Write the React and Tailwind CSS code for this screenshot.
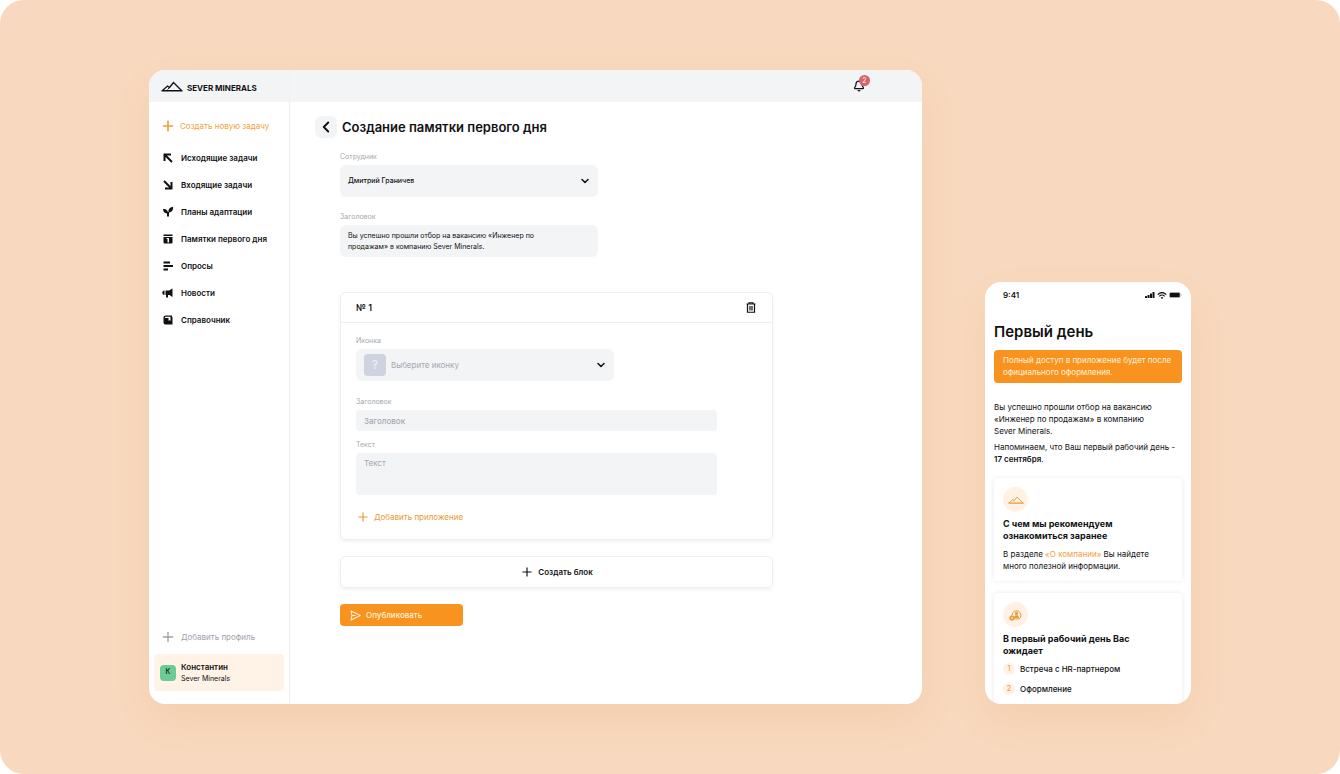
import { useState } from "react";
import { Bell, ChevronDown, ChevronLeft, Plus } from "lucide-react";

const MENU = [
    { label: "Исходящие задачи", icon: OutgoingIcon },
    { label: "Входящие задачи", icon: IncomingIcon },
    { label: "Планы адаптации", icon: SproutIcon },
    { label: "Памятки первого дня", icon: CalendarIcon },
    { label: "Опросы", icon: SurveyIcon },
    { label: "Новости", icon: MegaphoneIcon },
    { label: "Справочник", icon: BookIcon },
];

const STEPS = ["Встреча с HR-партнером", "Оформление"];

function OutgoingIcon() {
    return (
        <svg viewBox="0 0 24 24" className="size-3" fill="none" stroke="currentColor" strokeWidth="4">
            <path d="M5 18V5h13M5 5l15 15" />
        </svg>
    );
}

function IncomingIcon() {
    return (
        <svg viewBox="0 0 24 24" className="size-3" fill="none" stroke="currentColor" strokeWidth="4">
            <path d="M19 6v13H6M19 19 4 4" />
        </svg>
    );
}

function SproutIcon() {
    return (
        <svg viewBox="0 0 24 24" className="size-3" fill="currentColor">
            <path d="M2 6c6-1 9 2 10 7v2C6 15 2 12 2 6Z" />
            <path d="M22 2c1 6-3 11-9 11-1-6 2-11 9-11Z" />
            <path d="M10 12h4v9h-4z" />
        </svg>
    );
}

function CalendarIcon() {
    return (
        <svg viewBox="0 0 24 24" className="size-3" fill="currentColor">
            <path d="M3 3h18v3H3z" />
            <path fillRule="evenodd" d="M3 8h18v11a2 2 0 0 1-2 2H5a2 2 0 0 1-2-2V8Zm6 2v2h2v7h3v-9H9Z" />
        </svg>
    );
}

function SurveyIcon() {
    return (
        <svg viewBox="0 0 24 24" className="size-3" fill="currentColor">
            <path d="M3 3h13v4H3zM3 10h19v4H3zM3 17h9v4H3z" />
        </svg>
    );
}

function MegaphoneIcon() {
    return (
        <svg viewBox="0 0 24 24" className="size-3" fill="currentColor">
            <path d="M21 3v17l-6-4h-3v5H8v-5H7V7h7l7-4Z" />
            <path d="M5 7v9a4.5 4.5 0 0 1 0-9Z" />
        </svg>
    );
}

function BookIcon() {
    return (
        <svg viewBox="0 0 24 24" className="size-3" fill="currentColor">
            <path fillRule="evenodd" d="M7 3h13v3h1v15H7a4 4 0 0 1-4-4V7a4 4 0 0 1 4-4Zm0 2.500a1 1 0 0 0 0 2.500h6v6l2-2 2 2V5.500H7Z" />
        </svg>
    );
}

function Mountains({ className }) {
    return (
        <svg viewBox="0 0 44 22" className={className} fill="none" stroke="currentColor" strokeWidth="2.6">
            <path d="m3 19 10-9 4 3 8-10 16 16" />
            <path d="m16 14-3 3" strokeWidth="2" />
            <path d="M1 19.5h42" strokeWidth="3" />
        </svg>
    );
}

function TrashIcon() {
    return (
        <svg viewBox="0 0 20 22" className="h-[11px] w-[10px]" fill="none" stroke="currentColor" strokeWidth="2.4">
            <path d="M1 4h18M6 3V1.5h8V3M3 4v16.500h14V4M8 8v9M12 8v9" />
        </svg>
    );
}

function SendIcon() {
    return (
        <svg viewBox="0 0 22 22" className="size-[11px]" fill="none" stroke="currentColor" strokeWidth="2.2" strokeLinejoin="round">
            <path d="M2 2 20.500 11 2 20l2-9Z" />
            <path d="M4 11h7" />
        </svg>
    );
}

function PersonIcon() {
    return (
        <svg viewBox="0 0 26 24" className="h-3 w-[13px]" fill="none" stroke="currentColor" strokeWidth="2">
            <path d="M6 12a9 9 0 1 1 14 8h-9" />
            <circle cx="15" cy="9" r="2.500" fill="currentColor" />
            <path d="M11 17c0-5 8-5 8 0Z" fill="currentColor" />
            <circle cx="6" cy="18" r="4.500" fill="currentColor" />
            <circle cx="6" cy="18" r="1" stroke="#fff2e4" />
        </svg>
    );
}

function StatusIcons() {
    return (
        <div className="flex items-center gap-[2px]">
            <svg viewBox="0 0 20 12" className="h-[6px] w-[10px]" fill="currentColor">
                <rect x="0" y="8" width="4" height="4" rx="1" />
                <rect x="5" y="6" width="4" height="6" rx="1" />
                <rect x="10" y="3" width="4" height="9" rx="1" />
                <rect x="15" y="0" width="4" height="12" rx="1" />
            </svg>
            <svg viewBox="0 0 18 13" className="h-[7px] w-[10px]" fill="none" stroke="currentColor" strokeWidth="2.2">
                <path d="M1 5c5-5 11-5 16 0M4 8c3-3 7-3 10 0" />
                <path d="m6.500 10.500 2.500 2.500 2.500-2.500c-1.500-1-3.500-1-5 0Z" fill="currentColor" stroke="none" />
            </svg>
            <svg viewBox="0 0 26 12" className="h-[6px] w-[13px]" fill="currentColor">
                <rect x="0.5" y="0.5" width="22" height="11" rx="3" fill="none" stroke="currentColor" strokeOpacity="0.4" />
                <rect x="1.5" y="1.5" width="20" height="9" rx="2" />
                <path d="M24 4v4c2-1 2-3 0-4Z" opacity="0.4" />
            </svg>
        </div>
    );
}

function Label({ htmlFor, className = "", children }) {
    return (
        <label htmlFor={htmlFor} className={`mb-1 block text-[7px] leading-[8px] text-[#a6a9b0] ${className}`}>
            {children}
        </label>
    );
}

function Chevron() {
    return <ChevronDown className="pointer-events-none absolute top-[10px] right-[7px] size-3" strokeWidth={3} />;
}

function Sidebar() {
    return (
        <aside className="flex w-[141px] shrink-0 flex-col border-r border-[#eff0f3]">
            <div className="flex h-8 items-center gap-1 bg-[#f3f4f6] pl-3">
                <Mountains className="h-[11px] w-[22px]" />
                <span className="pt-1 text-[8px] leading-3 font-bold">SEVER MINERALS</span>
            </div>
            <button className="mt-4 flex h-4 items-center gap-1 pl-[11px] text-[8px] text-[#efa13b]">
                <Plus className="size-4" strokeWidth={2.5} />
                Создать новую задачу
            </button>
            <nav className="mt-[18px] flex flex-col gap-[15px] pl-[13px]">
                {MENU.map(({ label, icon: Icon }) => (
                    <a key={label} href="#" className="flex h-3 items-center gap-[7px] text-[8px] font-semibold">
                        <Icon />
                        {label}
                    </a>
                ))}
            </nav>
            <button className="mt-auto mb-[9px] flex h-4 items-center gap-[5px] pl-[11px] text-[8px] text-[#9fa3ab]">
                <Plus className="size-4" />
                Добавить профиль
            </button>
            <div className="mx-[5px] mb-[13px] flex h-[37px] items-center gap-[5px] rounded bg-[#fff3e8] pl-[6px]">
                <div className="flex size-4 items-center justify-center rounded bg-[#6dcc95] text-[7px] font-medium">К</div>
                <div className="leading-[11px]">
                    <div className="text-[8px] font-semibold">Константин</div>
                    <div className="text-[7px]">Sever Minerals</div>
                </div>
            </div>
        </aside>
    );
}

function BlockCard() {
    return (
        <section className="mt-[35px] rounded-md border border-[#eeeff1] shadow-[0_2px_4px_rgba(0,0,0,0.06)]">
            <div className="flex h-[30px] items-center justify-between border-b border-[#eeeff1] pr-4 pl-[15px]">
                <h2 className="text-[9px] font-semibold">№ 1</h2>
                <button aria-label="Удалить">
                    <TrashIcon />
                </button>
            </div>
            <div className="px-[15px] pt-[14px] pb-[15px]">
                <Label htmlFor="icon">Иконка</Label>
                <div className="relative w-[258px]">
                    <select id="icon" className="block h-8 w-full appearance-none rounded-md bg-[#f3f4f6] pl-[35px] text-[8px] text-[#a3a8b1]">
                        <option>Выберите иконку</option>
                    </select>
                    <span className="pointer-events-none absolute top-[5px] left-2 flex size-[22px] items-center justify-center rounded bg-[#cdd3df] text-[12px] font-medium text-[#eef0f4]">
                        ?
                    </span>
                    <Chevron />
                </div>
                <Label htmlFor="block-title" className="mt-[17px]">Заголовок</Label>
                <input
                    id="block-title"
                    placeholder="Заголовок"
                    className="block h-[21px] w-[361px] max-w-full rounded bg-[#f3f4f6] px-2 text-[8px] font-medium placeholder:text-[#a3a8b1]"
                />
                <Label htmlFor="block-text" className="mt-[10px]">Текст</Label>
                <textarea
                    id="block-text"
                    placeholder="Текст"
                    className="block h-[42px] w-[361px] max-w-full resize-none rounded bg-[#f3f4f6] px-2 py-[5px] text-[8px] leading-[11px] placeholder:text-[#a3a8b1]"
                />
                <button className="mt-[15px] flex h-[14px] items-center gap-1 text-[8px] text-[#e69a35]">
                    <Plus className="size-[14px]" />
                    Добавить приложение
                </button>
            </div>
        </section>
    );
}

function AdminWindow() {
    const [title, setTitle] = useState("Вы успешно прошли отбор на вакансию «Инженер по продажам» в компанию Sever Minerals.");

    return (
        <div className="flex min-w-0 flex-1 overflow-hidden rounded-2xl bg-white shadow-[0_16px_40px_rgba(230,140,80,0.14)]">
            <Sidebar />
            <div className="min-w-0 flex-1">
                <header className="flex h-8 items-center justify-end bg-[#f3f4f6] pr-[57px]">
                    <button aria-label="Уведомления" className="relative">
                        <Bell className="size-3" strokeWidth={2.5} />
                        <span className="absolute -top-[5px] -right-[5px] flex size-[11px] items-center justify-center rounded-full bg-[#d9616a] text-[7px] leading-none text-white">
                            2
                        </span>
                    </button>
                </header>
                <main className="pt-[14px] pl-[25px]">
                    <div className="flex items-center gap-[5px]">
                        <button aria-label="Назад" className="flex size-[22px] items-center justify-center rounded-md bg-[#f3f4f6]">
                            <ChevronLeft className="size-[18px]" strokeWidth={2.5} />
                        </button>
                        <h1 className="text-[13px] leading-[22px] font-semibold">Создание памятки первого дня</h1>
                    </div>
                    <form className="mt-[15px] ml-[25px] w-[433px] max-w-full" onSubmit={(e) => e.preventDefault()}>
                        <Label htmlFor="employee">Сотрудник</Label>
                        <div className="relative w-[258px]">
                            <select id="employee" className="block h-8 w-full appearance-none rounded-md bg-[#f3f4f6] px-2 text-[7px] font-medium">
                                <option>Дмитрий Граничев</option>
                            </select>
                            <Chevron />
                        </div>
                        <Label htmlFor="title" className="mt-4">Заголовок</Label>
                        <textarea
                            id="title"
                            value={title}
                            onChange={(e) => setTitle(e.target.value)}
                            className="block h-8 w-[258px] resize-none rounded-md bg-[#f3f4f6] py-[5px] pr-8 pl-2 text-[7px] leading-[11px]"
                        />
                        <BlockCard />
                        <button className="mt-4 flex h-8 w-full items-center justify-center gap-1 rounded-md border border-[#eeeff1] text-[8px] font-semibold shadow-[0_2px_4px_rgba(0,0,0,0.06)]">
                            <Plus className="size-[14px]" />
                            Создать блок
                        </button>
                        <button className="mt-4 flex h-[22px] w-[123px] items-center gap-[5px] rounded bg-[#f7931e] pl-[10px] text-[8px] font-medium text-[#fff0dc]">
                            <SendIcon />
                            Опубликовать
                        </button>
                    </form>
                </main>
            </div>
        </div>
    );
}

function PhoneCard({ icon, title, children }) {
    return (
        <section className="rounded bg-white p-[9px] shadow-[0_0_5px_rgba(0,0,0,0.09)]">
            <div className="flex size-[25px] items-center justify-center rounded-full bg-[#fff2e4] text-[#e89a35]">{icon}</div>
            <h3 className="mt-[6px] pr-5 text-[9px] leading-3 font-bold">{title}</h3>
            {children}
        </section>
    );
}

function Phone() {
    return (
        <div className="h-[422px] w-[206px] shrink-0 self-end overflow-hidden rounded-2xl bg-white px-[9px] text-[8px] leading-3 shadow-[0_16px_40px_rgba(230,140,80,0.14)]">
            <div className="flex items-center justify-between pt-[7px] pl-[9px]">
                <span className="font-semibold">9:41</span>
                <StatusIcons />
            </div>
            <h2 className="mt-[21px] text-[15px] leading-5 font-semibold">Первый день</h2>
            <p className="mt-2 rounded bg-[#f7931e] px-[9px] pt-1 pb-[5px] text-[#fff0dc]">
                Полный доступ в приложение будет после официального оформления.
            </p>
            <p className="mt-[18px]">
                Вы успешно прошли отбор на вакансию «Инженер по продажам» в компанию
                <br />
                Sever Minerals.
            </p>
            <p className="mt-1">
                Напоминаем, что Ваш первый рабочий день - <b className="font-semibold">17 сентября</b>.
            </p>
            <div className="mt-[13px] flex flex-col gap-3">
                <PhoneCard icon={<Mountains className="h-2 w-4" />} title="С чем мы рекомендуем ознакомиться заранее">
                    <p className="mt-[6px]">
                        В разделе <a href="#" className="text-[#efa03c]">«О компании»</a> Вы найдете много полезной информации.
                    </p>
                </PhoneCard>
                <PhoneCard icon={<PersonIcon />} title="В первый рабочий день Вас ожидает">
                    <ol className="mt-[6px] flex flex-col gap-2 font-medium">
                        {STEPS.map((step, i) => (
                            <li key={step} className="flex items-center gap-[5px]">
                                <span className="flex size-3 items-center justify-center rounded-full bg-[#fff2e4] text-[7px] text-[#e9a050]">
                                    {i + 1}
                                </span>
                                {step}
                            </li>
                        ))}
                    </ol>
                </PhoneCard>
            </div>
        </div>
    );
}

export default function App() {
    return (
        <div className="bg-white font-['Inter',sans-serif] text-[#111113]">
            <div className="flex min-h-screen gap-[63px] rounded-3xl bg-[#f8d9bf] px-[149px] py-[70px]">
                <AdminWindow />
                <Phone />
            </div>
        </div>
    );
}
